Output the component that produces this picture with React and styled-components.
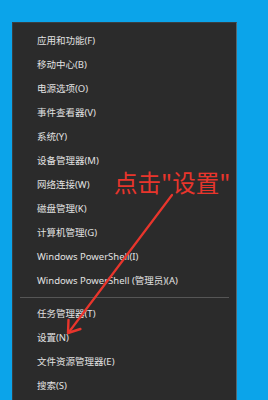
import React from "react";
import styled, { createGlobalStyle } from "styled-components";

const Global = createGlobalStyle`
  html, body { margin: 0; padding: 0; background: #0ba4ea; }
  body {
    font-family: "Noto Sans", "Noto Sans CJK SC", sans-serif;
  }
  #root { background: #0ba4ea; }
`;

const Stage = styled.div`
  position: relative;
  width: 268px;
  height: 400px;
  overflow: hidden;
  background: #0ba4ea;
  display: flex;
  align-items: flex-start;
  padding: 22px 0 0 12px;
  box-sizing: border-box;
`;

const Menu = styled.div`
  width: 225px;
  height: 420px;
  flex: none;
  box-sizing: border-box;
  background: #2b2b2b;
  border: 1px solid #3a3f42;
  border-right: 1px solid #56666d;
  padding-top: 6px;
  display: flex;
  flex-direction: column;
`;

const Item = styled.div`
  height: 24px;
  line-height: 24px;
  padding-left: 24px;
  color: #e2e2e2;
  font-size: 9.5px;
  white-space: nowrap;
`;

const Separator = styled.div`
  height: 1px;
  background: #565656;
  margin: 4px 7px 4px 7px;
`;

const Note = styled.div`
  position: absolute;
  left: 114px;
  top: 167px;
  color: #e8352c;
  font-family: "Noto Sans CJK SC", sans-serif;
  font-size: 23.5px;
  line-height: 30px;
  white-space: nowrap;
`;

const Overlay = styled.svg`
  position: absolute;
  left: 0;
  top: 0;
  pointer-events: none;
`;

const groupA = [
  "应用和功能(F)",
  "移动中心(B)",
  "电源选项(O)",
  "事件查看器(V)",
  "系统(Y)",
  "设备管理器(M)",
  "网络连接(W)",
  "磁盘管理(K)",
  "计算机管理(G)",
  "Windows PowerShell(I)",
  "Windows PowerShell (管理员)(A)",
];

const groupB = ["任务管理器(T)", "设置(N)", "文件资源管理器(E)", "搜索(S)"];

export default function App() {
  return (
    <Stage>
      <Global />
      <Menu>
        {groupA.map((t) => (
          <Item key={t}>{t}</Item>
        ))}
        <Separator />
        {groupB.map((t) => (
          <Item key={t}>{t}</Item>
        ))}
      </Menu>
      <Note>点击"设置"</Note>
      <Overlay width="268" height="400" viewBox="0 0 268 400">
        <line x1="172" y1="195" x2="69" y2="332" stroke="#e8352c" strokeWidth="2.2" strokeLinecap="round" />
        <polyline points="80.4,329 68,333 68.5,320" fill="none" stroke="#e8352c" strokeWidth="2.4" strokeLinejoin="round" strokeLinecap="round" />
      </Overlay>
    </Stage>
  );
}
